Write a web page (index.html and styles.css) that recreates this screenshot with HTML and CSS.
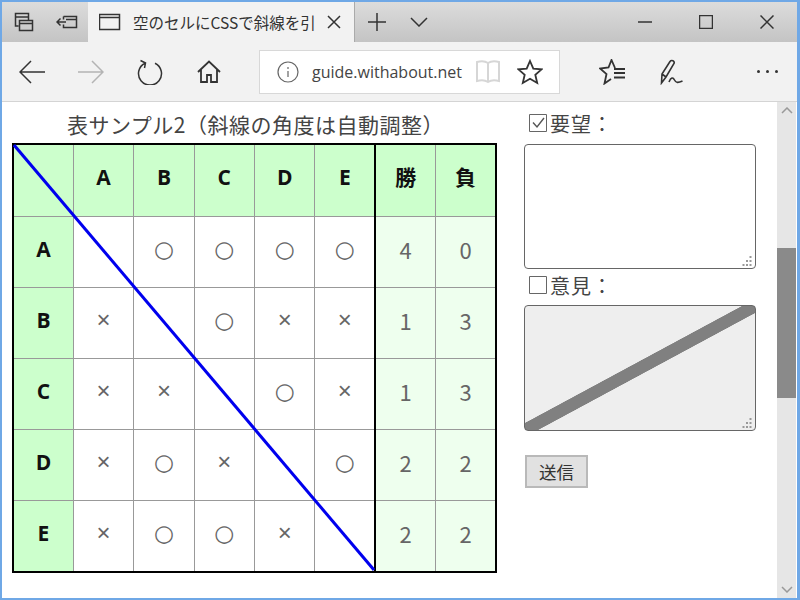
FILE: index.html
```html
<!DOCTYPE html>
<html lang="ja">
<head>
    <meta charset="UTF-8">
    <title>空のセルにCSSで斜線を引く</title>
    <link rel="stylesheet" href="styles.css">
</head>
<body>
<div class="window">
    <div class="tabstrip">
        <div class="strip-btn">
            <svg width="20" height="20" viewBox="0 0 20 20"><path d="M1.5 1.5h13v3.500h-13zM1.500 5v9h3M5.500 8.500h13v10h-13zM5.500 11.500h13M14.500 5v3.500"/></svg>
        </div>
        <div class="strip-btn">
            <svg width="22" height="14" viewBox="0 0 22 14"><path d="M7.500 1.500h13v11h-13v-3M7.500 1.500v3M10 7H1M4.500 3.500L1 7l3.500 3.500M10 4.500h10"/></svg>
        </div>
        <div class="tab">
            <svg class="tab-icon" width="22" height="18" viewBox="0 0 22 18"><path d="M.5 1.500h20v15H.5zM.5 4.500h20"/></svg>
            <span class="tab-title">空のセルにCSSで斜線を引</span>
            <svg class="tab-close" width="14" height="14" viewBox="0 0 14 14"><path d="M1 1l12 12M13 1L1 13"/></svg>
        </div>
        <div class="strip-btn">
            <svg width="18" height="18" viewBox="0 0 18 18"><path d="M9 0v18M0 9h18"/></svg>
        </div>
        <div class="strip-btn strip-chevron">
            <svg width="18" height="10" viewBox="0 0 18 10"><path d="M1 1l8 8 8-8"/></svg>
        </div>
        <div class="strip-gap"></div>
        <div class="win-btn">
            <svg width="14" height="2" viewBox="0 0 14 2"><path d="M0 1h14"/></svg>
        </div>
        <div class="win-btn">
            <svg width="14" height="14" viewBox="0 0 14 14"><path d="M.5.500h13v13H.5z"/></svg>
        </div>
        <div class="win-btn">
            <svg width="14" height="14" viewBox="0 0 14 14"><path d="M.5.500l13 13M13.500.500l-13 13"/></svg>
        </div>
    </div>

    <div class="toolbar">
        <div class="tool-btn">
            <svg width="26" height="24" viewBox="0 0 26 24"><path d="M26 12H1M12 1L1 12l11 11"/></svg>
        </div>
        <div class="tool-btn tool-disabled">
            <svg width="26" height="24" viewBox="0 0 26 24"><path d="M0 12h25M14 1l11 11-11 11"/></svg>
        </div>
        <div class="tool-btn">
            <svg width="26" height="26" viewBox="0 0 26 26"><path d="M8 4.200A11.500 11.500 0 1 0 18 4.200M3.500 1.500L8.500 4l-1 5"/></svg>
        </div>
        <div class="tool-btn">
            <svg class="thick" width="24" height="24" viewBox="0 0 24 24"><path d="M1 12L12 1.500 23 12M4 9.500V22h6v-7h4v7h6V9.500"/></svg>
        </div>
        <div class="address">
            <svg class="addr-info" width="22" height="22" viewBox="0 0 22 22"><circle cx="11" cy="11" r="10"/><path d="M11 10v6M11 6v2"/></svg>
            <span class="addr-url">guide.withabout.net</span>
            <svg class="addr-book" width="26" height="24" viewBox="0 0 26 24"><path d="M2 2c4-1 8-1 11 1 3-2 7-2 11-1v19c-4-1-8-1-11 1-3-2-7-2-11-1zM13 3v19"/></svg>
            <svg class="addr-star" width="26" height="26" viewBox="0 0 26 26"><path d="M13 2l3.300 7.700 8.200.700-6.200 5.400 1.900 8.200L13 19.700 5.800 24l1.900-8.200L1.500 10.400l8.200-.700z"/></svg>
        </div>
        <div class="tool-btn tool-favs">
            <svg class="thick" width="26" height="26" viewBox="0 0 26 26"><path d="M16 9L12.500 1 9.500 8.500 1 9.500l6.500 5.500L5.500 24.500l6.500-4.500M15 10h11M15 14h11M15 18.500h11"/></svg>
        </div>
        <div class="tool-btn">
            <svg width="24" height="26" viewBox="0 0 24 26"><path class="pen" d="M2.500 24L3 15 11 2.500c1.500-2 5-.5 4 2L7 18zM3 15l4 3M2.500 24L7 18M10 23c2-5 4-5 5.500-2s3.500 3 8 1"/></svg>
        </div>
        <div class="toolbar-gap"></div>
        <div class="tool-btn tool-more">
            <span class="dot"></span><span class="dot"></span><span class="dot"></span>
        </div>
    </div>

    <div class="viewport">
        <div class="page">
            <div class="score">
                <table class="league">
                    <caption>表サンプル2（斜線の角度は自動調整）</caption>
                    <tr class="row-head">
                        <th class="corner"></th><th>A</th><th>B</th><th>C</th><th>D</th><th class="edge">E</th><th class="sum">勝</th><th class="sum">負</th>
                    </tr>
                    <tr>
                        <th>A</th><td></td><td class="o">○</td><td class="o">○</td><td class="o">○</td><td class="edge o">○</td><td class="total">4</td><td class="total">0</td>
                    </tr>
                    <tr>
                        <th>B</th><td class="x">×</td><td></td><td class="o">○</td><td class="x">×</td><td class="edge x">×</td><td class="total">1</td><td class="total">3</td>
                    </tr>
                    <tr>
                        <th>C</th><td class="x">×</td><td class="x">×</td><td></td><td class="o">○</td><td class="edge x">×</td><td class="total">1</td><td class="total">3</td>
                    </tr>
                    <tr>
                        <th>D</th><td class="x">×</td><td class="o">○</td><td class="x">×</td><td></td><td class="edge o">○</td><td class="total">2</td><td class="total">2</td>
                    </tr>
                    <tr>
                        <th>E</th><td class="x">×</td><td class="o">○</td><td class="o">○</td><td class="x">×</td><td class="edge"></td><td class="total">2</td><td class="total">2</td>
                    </tr>
                </table>
                <svg class="diagonal" width="362" height="427" viewBox="0 0 362 427"><path d="M1 1L361 426"/></svg>
            </div>
            <form class="side">
                <label class="field-label">
                    <svg width="18" height="18" viewBox="0 0 18 18"><path class="box" d="M.5.500h17v17H.5z"/><path class="tick" d="M4 8.500l4 4.500 7-9"/></svg>
                    要望：
                </label>
                <div class="memo-wrap">
                    <textarea class="memo"></textarea>
                    <svg class="grip" width="11" height="11" viewBox="0 0 11 11"><path d="M8.500 1v2M5 5v2M8.500 5v2M1.500 9v2M5 9v2M8.500 9v2"/></svg>
                </div>
                <label class="field-label label-second">
                    <svg width="18" height="18" viewBox="0 0 18 18"><path class="box" d="M.5.500h17v17H.5z"/></svg>
                    意見：
                </label>
                <div class="memo-wrap">
                    <textarea class="memo memo-off" disabled></textarea>
                    <svg class="grip" width="11" height="11" viewBox="0 0 11 11"><path d="M8.500 1v2M5 5v2M8.500 5v2M1.500 9v2M5 9v2M8.500 9v2"/></svg>
                </div>
                <button type="button" class="send">送信</button>
            </form>
        </div>
        <div class="scrollbar">
            <div class="scroll-arrow">
                <svg width="12" height="7" viewBox="0 0 12 7"><path d="M1 6l5-5 5 5"/></svg>
            </div>
            <div class="scroll-track"><div class="scroll-thumb"></div></div>
            <div class="scroll-arrow">
                <svg width="12" height="7" viewBox="0 0 12 7"><path d="M1 1l5 5 5-5"/></svg>
            </div>
        </div>
    </div>
</div>
</body>
</html>
```
FILE: styles.css
```css
html, body {
    margin: 0;
    padding: 0;
    height: 100%;
    overflow: hidden;
    font-family: "Noto Sans CJK JP", "Noto Sans", sans-serif;
    color: #444;
}
svg {
    display: block;
    fill: none;
    stroke: #333;
    stroke-width: 1.5;
}
.window {
    box-sizing: border-box;
    width: 800px;
    height: 600px;
    border: 2px solid #6fa8e6;
    border-right-width: 3px;
    display: flex;
    flex-direction: column;
    background: #fff;
}

/* tab strip */
.tabstrip {
    display: flex;
    height: 40px;
    background: linear-gradient(#dcdcdc, #c4c4c4);
    flex-shrink: 0;
}
.strip-btn {
    width: 43px;
    display: flex;
    align-items: center;
    justify-content: center;
}
.strip-chevron {
    margin-left: -1px;
}
.tab {
    width: 267px;
    background: #f2f2f2;
    display: flex;
    align-items: center;
    border-right: 1px solid #aaa;
    box-sizing: border-box;
}
.tab-icon {
    margin-left: 11px;
}
.tab-title {
    margin-left: 12px;
    width: 184px;
    white-space: nowrap;
    font-size: 15.500px;
    color: #333;
}
.tab-close {
    margin-left: 10px;
}
.strip-gap {
    flex: 1;
}
.win-btn {
    width: 61px;
    display: flex;
    align-items: center;
    justify-content: center;
}

/* address bar row */
.toolbar {
    display: flex;
    align-items: center;
    height: 59px;
    background: #f2f2f2;
    border-bottom: 1px solid #d4d4d4;
    flex-shrink: 0;
}
.tool-btn {
    width: 59px;
    display: flex;
    align-items: center;
    justify-content: center;
}
.tool-disabled svg {
    stroke: #b4b4b4;
}
.thick {
    stroke-width: 1.800;
}
.pen {
    stroke-width: 1.600;
}
.address {
    margin-left: 21px;
    margin-right: 22px;
    width: 301px;
    height: 44px;
    box-sizing: border-box;
    background: #fff;
    border: 1px solid #d8d8d8;
    display: flex;
    align-items: center;
}
.addr-info {
    margin-left: 17px;
    stroke: #666;
    stroke-width: 1.200;
}
.addr-url {
    margin-left: 13px;
    width: 151px;
    white-space: nowrap;
    font-family: "Open Sans", sans-serif;
    font-size: 16px;
    color: #444;
}
.addr-book {
    margin-left: 12px;
    stroke: #d6d6d6;
    stroke-width: 2;
}
.addr-star {
    margin-left: 16px;
    stroke-width: 1.800;
}
.toolbar-gap {
    flex: 1;
}
.tool-more {
    gap: 6px;
}
.dot {
    width: 3px;
    height: 3px;
    background: #333;
    border-radius: 50%;
}

/* page area */
.viewport {
    flex: 1;
    display: flex;
    min-height: 0;
}
.page {
    flex: 1;
    display: flex;
    padding-left: 10px;
}
.score {
    position: relative;
    align-self: flex-start;
    width: 485px;
}
.league {
    border-collapse: collapse;
    table-layout: fixed;
    width: 485px;
    font-size: 22px;
}
.league caption {
    height: 41px;
    padding-left: 2px;
    font-size: 21px;
    letter-spacing: .5px;
    line-height: 44px;
    white-space: nowrap;
}
.league th, .league td {
    border: 1px solid #999;
    padding: 0 0 6px;
    text-align: center;
    height: 64px;
    line-height: 1;
}
.league th {
    background: #ccffcc;
    color: #111;
    font-family: "Open Sans", "Noto Sans CJK JP", sans-serif;
    font-size: 21px;
    font-weight: bold;
}
.league .row-head th {
    height: 65px;
    padding-bottom: 6px;
    border-top: 2px solid #000;
}
.league tr > :first-child {
    border-left: 2px solid #000;
}
.league tr > :last-child {
    border-right: 2px solid #000;
}
.league tr:last-child > * {
    border-bottom: 2px solid #000;
}
.league .edge {
    border-right: 2px solid #000;
}
.league .total {
    background: #eeffee;
    color: #666;
}
.league .o {
    font-family: "DejaVu Sans", sans-serif;
    font-size: 23px;
    color: #666;
}
.league .x {
    font-family: "Liberation Sans", sans-serif;
    font-size: 24px;
    color: #666;
}
.diagonal {
    position: absolute;
    left: 1px;
    top: 42px;
    stroke: #0000ee;
    stroke-width: 3;
}
.side {
    margin-left: 27px;
    width: 232px;
    display: flex;
    flex-direction: column;
    align-items: flex-start;
}
.field-label {
    display: flex;
    align-items: center;
    gap: 3px;
    height: 42px;
    padding-left: 5px;
    font-size: 20px;
    letter-spacing: 1px;
    color: #444;
}
.label-second {
    box-sizing: border-box;
    height: 36px;
    padding-bottom: 4px;
}
.box {
    stroke: #666;
    stroke-width: 1;
}
.tick {
    stroke: #555;
    stroke-width: 1.400;
}
.memo-wrap {
    position: relative;
    display: flex;
}
.memo {
    box-sizing: border-box;
    width: 232px;
    height: 125px;
    margin: 0;
    border: 1px solid #666;
    border-radius: 4px;
    background: #fff;
    outline: none;
    resize: none;
}
.memo-off {
    height: 126px;
    background: linear-gradient(to bottom right, #eee 47%, #808080 47.300%, #808080 52.700%, #eee 53%);
}
.grip {
    position: absolute;
    right: 3px;
    bottom: 3px;
    stroke: #999;
    stroke-width: 2;
    stroke-dasharray: 2 2;
}
.send {
    margin-top: 24px;
    margin-left: 1px;
    width: 63px;
    height: 33px;
    padding: 0;
    background: #e1e1e1;
    border: 2px solid #b9b9b9;
    font-family: inherit;
    font-size: 17.500px;
    color: #333;
}

/* scrollbar */
.scrollbar {
    width: 19px;
    margin-right: 1px;
    background: #e6e6e6;
    display: flex;
    flex-direction: column;
    flex-shrink: 0;
}
.scroll-arrow {
    height: 17px;
    display: flex;
    align-items: center;
    justify-content: center;
}
.scroll-arrow svg {
    stroke: #999;
}
.scroll-track {
    flex: 1;
    padding-top: 129px;
}
.scroll-thumb {
    height: 150px;
    background: #8a8a8a;
}
```
